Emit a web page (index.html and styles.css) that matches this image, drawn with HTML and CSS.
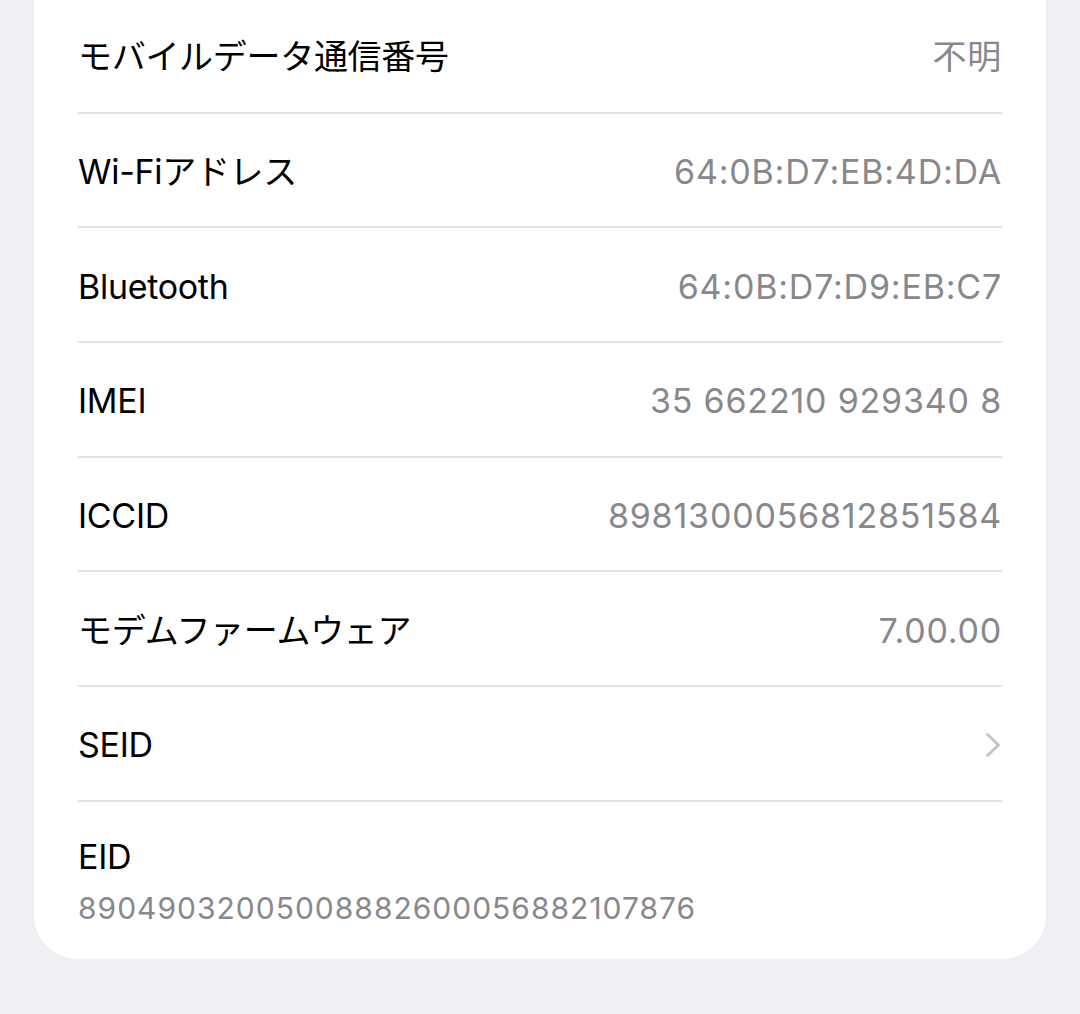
FILE: index.html
```html
<!DOCTYPE html>
<html lang="ja">
<head>
  <meta charset="UTF-8">
  <meta name="viewport" content="width=device-width, initial-scale=1.0">
  <title>情報</title>
  <link rel="stylesheet" href="styles.css">
</head>
<body>
  <main class="page">
    <section class="group">
      <div class="row">
        <span class="label">モバイルデータ通信番号</span>
        <span class="value">不明</span>
      </div>
      <div class="row">
        <span class="label">Wi-Fiアドレス</span>
        <span class="value">64:0B:D7:EB:4D:DA</span>
      </div>
      <div class="row">
        <span class="label">Bluetooth</span>
        <span class="value">64:0B:D7:D9:EB:C7</span>
      </div>
      <div class="row">
        <span class="label">IMEI</span>
        <span class="value">35 662210 929340 8</span>
      </div>
      <div class="row">
        <span class="label">ICCID</span>
        <span class="value">8981300056812851584</span>
      </div>
      <div class="row">
        <span class="label">モデムファームウェア</span>
        <span class="value">7.00.00</span>
      </div>
      <div class="row">
        <span class="label">SEID</span>
        <svg class="chevron" width="16" height="26" viewBox="0 0 16 26">
          <polyline points="2.5,2.5 13.5,13 2.5,23.5" />
        </svg>
      </div>
      <div class="row row-stacked">
        <span class="label">EID</span>
        <span class="sub">89049032005008882600056882107876</span>
      </div>
    </section>
  </main>
</body>
</html>
```

FILE: styles.css
```css
body {
  margin: 0;
  padding: 0;
  background-color: #efeff4;
  font-family: Inter, "Noto Sans CJK JP", sans-serif;
  height: 1014px;
  overflow: hidden;
}
.page {
  padding: 0 34px;
}
.group {
  margin-top: -1px;
  background: #fff;
  border-radius: 0 0 44px 44px;
  padding: 0 44px;
}
.row {
  display: flex;
  align-items: center;
  justify-content: space-between;
  box-sizing: border-box;
  height: 114.67px;
  padding-top: 4px;
  border-bottom: 2px solid #e3e3e6;
}
.label {
  font-size: 34px;
  line-height: 40px;
  color: #000;
  letter-spacing: -0.3px;
}
.value {
  font-size: 34px;
  line-height: 40px;
  color: #88888c;
  letter-spacing: 0.8px;
}
.chevron {
  display: block;
  margin-right: 1px;
}
.chevron polyline {
  fill: none;
  stroke: #c4c4c7;
  stroke-width: 3;
  stroke-linecap: round;
  stroke-linejoin: round;
}
.row-stacked {
  height: 157px;
  border-bottom: none;
  flex-direction: column;
  align-items: flex-start;
  justify-content: flex-start;
  padding-top: 35px;
  gap: 13px;
}
.sub {
  font-size: 30px;
  line-height: 36px;
  color: #88888c;
  letter-spacing: 1px;
}
```
